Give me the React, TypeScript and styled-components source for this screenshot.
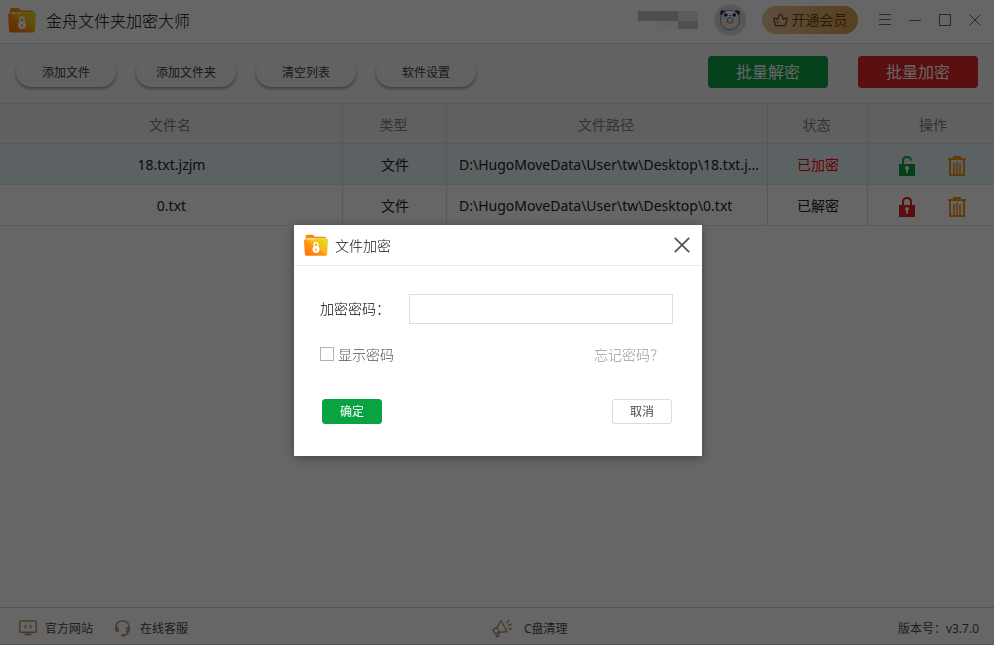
import React from "react";
import styled, { createGlobalStyle, css } from "styled-components";

const GlobalStyle = createGlobalStyle`
  * { box-sizing: border-box; }
  html, body { margin: 0; padding: 0; }
  body, button, input {
    font-family: "Noto Sans", "Noto Sans CJK SC", sans-serif;
    font-weight: 400;
  }
  button { cursor: pointer; padding: 0; border: 0; background: none; }
  a { color: inherit; text-decoration: none; }
  svg { display: block; flex: none; }
`;

const Window = styled.div`
  min-height: 100vh;
  display: flex;
  flex-direction: column;
  background: #ffffff;
  color: #1a1a1a;
`;

const TitleBar = styled.header`
  height: 44px;
  display: flex;
  align-items: center;
  padding: 0 12px 4px 8px;
  border-bottom: 1px solid #dcdcdc;
`;

const AppName = styled.h1`
  margin: 0 auto 0 10px;
  padding-top: 2px;
  font-size: 16px;
  line-height: 24px;
  font-weight: 300;
  color: #000000;
`;

const Avatar = styled.button`
  margin-left: 16px;
`;

const VipButton = styled.button`
  width: 96px;
  height: 28px;
  margin: 0 20px 0 16px;
  display: flex;
  align-items: center;
  justify-content: center;
  gap: 4px;
  border-radius: 14px;
  background: linear-gradient(90deg, #e8c59c, #dca050);
  color: #6b430c;
  font-size: 14px;
  line-height: 20px;
`;

const WindowControls = styled.div`
  display: flex;
  gap: 16px;
`;

const WindowButton = styled.button`
  width: 14px;
  height: 14px;
  color: #666666;
`;

const Toolbar = styled.div`
  height: 60px;
  display: flex;
  align-items: center;
  justify-content: space-between;
  padding: 0 16px 3px;
  background: #f5f5f5;
  border-bottom: 1px solid #e0e0e0;
`;

const ToolGroup = styled.div<{ $gap: number }>`
  display: flex;
  gap: ${(p) => p.$gap}px;
`;

const PillButton = styled.button`
  width: 100px;
  height: 30px;
  padding-top: 2px;
  border-radius: 15px;
  background: #f6f6f6;
  box-shadow: 0 2px 3px rgba(0, 0, 0, 0.35);
  color: #404040;
  font-size: 12px;
  line-height: 18px;
`;

const BatchButton = styled.button<{ $color: string }>`
  width: 120px;
  height: 32px;
  border-radius: 4px;
  background: ${(p) => p.$color};
  color: #ffffff;
  font-size: 16px;
  line-height: 24px;
`;

const Content = styled.main`
  flex: 1;
`;

const FileTable = styled.table`
  width: 100%;
  table-layout: fixed;
  border-collapse: separate;
  border-spacing: 0;
  font-size: 14px;
  line-height: 20px;
`;

const Column = styled.col<{ $width?: number }>`
  ${(p) => p.$width && css`width: ${p.$width}px;`}
`;

const HeadCell = styled.th`
  height: 40px;
  padding: 2px 0 0 4px;
  font-weight: 400;
  color: #808080;
  background: #f0f0f0;
  border-bottom: 1px solid #dedede;
  &:not(:last-child) { border-right: 1px solid #dcdcdc; padding: 2px 2px 0 0; }
`;

const Row = styled.tr<{ $selected?: boolean }>`
  background: ${(p) => (p.$selected ? "#e6f3f9" : "#ffffff")};
`;

const Cell = styled.td<{ $left?: boolean; $alert?: boolean }>`
  height: 41px;
  padding: 2px 0 0 ${(p) => (p.$left ? 12 : 1)}px;
  text-align: ${(p) => (p.$left ? "left" : "center")};
  color: ${(p) => (p.$alert ? "#ff0000" : "#222222")};
  white-space: nowrap;
  overflow: hidden;
  border-bottom: 1px solid #e4e4e4;
  &:not(:last-child) { border-right: 1px solid #dcdcdc; }
`;

const RowActions = styled.div`
  display: flex;
  justify-content: center;
  gap: 32px;
  padding: 1px 0 0 1px;
`;

const Footer = styled.footer`
  height: 38px;
  display: grid;
  grid-template-columns: 50% 1fr auto;
  align-items: center;
  padding: 6px 15px 0 3px;
  border-top: 1px solid #cfcfcf;
  border-bottom: 1px solid #cfcfcf;
  font-size: 12px;
  line-height: 18px;
  color: #4a4a4a;
`;

const FooterLinks = styled.nav`
  display: flex;
  gap: 20px;
  padding-left: 15px;
`;

const FooterLink = styled.a<{ $gap: number }>`
  display: flex;
  align-items: center;
  gap: ${(p) => p.$gap}px;
  padding-left: 1px;
  & > svg { margin-bottom: 2px; }
`;

const Backdrop = styled.div`
  position: fixed;
  inset: 0;
  display: flex;
  align-items: center;
  justify-content: center;
  padding: 36px 0 0 2px;
  background: rgba(0, 0, 0, 0.6);
`;

const Dialog = styled.form`
  width: 408px;
  background: #ffffff;
  box-shadow: 0 2px 10px rgba(0, 0, 0, 0.35);
  font-size: 14px;
  line-height: 20px;
`;

const DialogHeader = styled.div`
  height: 41px;
  display: flex;
  align-items: center;
  gap: 7px;
  padding: 0 12px 0 10px;
  border-bottom: 1px solid #ebebeb;
`;

const DialogTitle = styled.h2`
  margin: 0 auto 0 0;
  padding-top: 2px;
  font-size: 14px;
  line-height: 20px;
  font-weight: 300;
  color: #111111;
`;

const DialogBody = styled.div`
  padding: 28px 29px 32px 26px;
`;

const FieldRow = styled.div`
  display: flex;
  align-items: center;
  justify-content: space-between;
`;

const FieldLabel = styled.label`
  font-weight: 300;
  color: #000000;
`;

const PasswordInput = styled.input`
  width: 264px;
  height: 30px;
  padding: 0 8px;
  border: 1px solid #dcdcdc;
  border-radius: 0;
  background: #ffffff;
  font-size: 14px;
  outline: none;
`;

const OptionRow = styled(FieldRow)`
  margin-top: 21px;
  padding-right: 9px;
  font-weight: 300;
`;

const CheckLabel = styled.label`
  display: flex;
  align-items: center;
  gap: 4px;
  color: #555555;
`;

const CheckBox = styled.input`
  appearance: none;
  width: 14px;
  height: 14px;
  margin: 0 0 2px;
  border: 1px solid #b4b4b4;
  background: #ffffff;
  &:checked { background: #0aa344; }
`;

const ForgotLink = styled.a`
  color: #9a9a9a;
`;

const ButtonRow = styled(FieldRow)`
  margin-top: 34px;
  padding: 0 1px 0 2px;
`;

const DialogButton = styled.button<{ $primary?: boolean }>`
  width: 60px;
  height: 25px;
  border-radius: 3px;
  border: 1px solid ${(p) => (p.$primary ? "#0aa344" : "#dcdcdc")};
  background: ${(p) => (p.$primary ? "#0aa344" : "#ffffff")};
  color: ${(p) => (p.$primary ? "#ffffff" : "#4a4a4a")};
  font-size: 12px;
  line-height: 18px;
`;

function FolderIcon({ size, id }: { size: number; id: string }) {
  return (
    <svg width={size} height={size} viewBox="0 0 28 28" aria-hidden="true">
      <defs>
        <linearGradient id={id} x1="0" y1="1" x2="1" y2="0">
          <stop offset="0" stopColor="#ff6a00" />
          <stop offset="0.5" stopColor="#ff9a1a" />
          <stop offset="0.52" stopColor="#ffb31a" />
          <stop offset="1" stopColor="#d6e81c" />
        </linearGradient>
      </defs>
      <path d="M2 3.500Q2 2 3.500 2H10.500L13 4.500H24Q25.500 4.500 25.500 6V13H2Z" fill="#ff8a00" />
      <path d="M3 6H25V12H3Z" fill="#ffe9c4" />
      <path d="M0 9Q0 7.500 1.500 7.500H12L14.500 6.500H26.500Q28 6.500 27.900 8L27 24.500Q26.900 26.500 25 26.500H3Q1.200 26.500 1.100 24.500Z" fill={`url(#${id})`} />
      <path d="M11.800 16.500V13.500A2.200 2.400 0 0 1 16.200 13.500V16.500" fill="none" stroke="#fff" strokeWidth="1.500" />
      <circle cx="14" cy="19.300" r="4" fill="#fff" />
      <path d="M14 18.600V20.400" stroke="#f59a23" strokeWidth="1.400" strokeLinecap="round" />
    </svg>
  );
}

function MaskedName() {
  return (
    <svg width="60" height="18" viewBox="0 0 60 18" role="img" aria-label="用户" shapeRendering="crispEdges">
      <path d="M0 0H40V10H0Z" fill="#c4c4c4" />
      <path d="M40 0H60V10H40Z" fill="#e6e6e6" />
      <path d="M20 10H40V18H20Z" fill="#fafafa" />
      <path d="M40 10H60V18H40Z" fill="#c8c8c8" />
    </svg>
  );
}

function PandaIcon() {
  return (
    <svg width="32" height="32" viewBox="0 0 32 32" aria-hidden="true">
      <defs>
        <linearGradient id="ring" x1="0" y1="0" x2="1" y2="0">
          <stop offset="0" stopColor="#f0e2d0" />
          <stop offset="0.5" stopColor="#d5e3f2" />
          <stop offset="1" stopColor="#f0cfd3" />
        </linearGradient>
      </defs>
      <circle cx="16" cy="16" r="16" fill="url(#ring)" />
      <circle cx="16" cy="16" r="14" fill="#c9dff0" />
      <circle cx="9" cy="9" r="2.800" fill="#332650" />
      <circle cx="23" cy="9" r="2.800" fill="#332650" />
      <circle cx="16" cy="16" r="9.700" fill="#efe0d0" stroke="#8580a0" strokeWidth="1" />
      <path d="M8.500 11.500Q10 7 16 7T23.500 11.500Q20 14 16 14T8.500 11.500Z" fill="#fff" />
      <ellipse cx="11.800" cy="11" rx="2" ry="1.800" fill="#332650" />
      <ellipse cx="20.200" cy="11" rx="2" ry="1.800" fill="#332650" />
      <path d="M14.700 11H17.300L16 12.300Z" fill="#332650" />
      <circle cx="16" cy="16.300" r="3" fill="#c9dff0" stroke="#6c83ad" strokeWidth="1" />
    </svg>
  );
}

function CrownIcon() {
  return (
    <svg width="15" height="14" viewBox="0 0 15 14" fill="none" stroke="currentColor" strokeWidth="1.200" strokeLinejoin="round" aria-hidden="true">
      <path d="M3.200 12.700Q2.600 12.700 2.400 12L.800 6.200Q.600 4.800 2 5L4.500 6.500L6.300 1.800Q7.500 .200 8.700 1.800L10.500 6.500L13 5Q14.400 4.800 14.200 6.200L12.600 12Q12.400 12.700 11.800 12.700Z" />
      <path d="M4.200 8.500L5 10.300" />
    </svg>
  );
}

function ControlIcon({ d }: { d: string }) {
  return (
    <svg width="14" height="14" viewBox="0 0 14 14" fill="none" stroke="currentColor" strokeWidth="1" aria-hidden="true">
      <path d={d} />
    </svg>
  );
}

function LockIcon({ open }: { open?: boolean }) {
  return (
    <svg width="18" height="22" viewBox="0 0 18 22" aria-hidden="true">
      <path
        d={open ? "M5 10V6Q5 2 9 2Q12.500 2 13 5.500" : "M5 10V6Q5 2 9 2T13 6V10"}
        fill="none"
        stroke={open ? "#0aa344" : "#e32323"}
        strokeWidth="2"
      />
      <path d="M1 9H17V21H1Z" fill={open ? "#0aa344" : "#e32323"} />
      <circle cx="9" cy="13" r="2" fill="#ffffff" />
      <path d="M9 13V18" stroke="#ffffff" strokeWidth="1.600" />
    </svg>
  );
}

function TrashIcon() {
  return (
    <svg width="18" height="22" viewBox="0 0 18 22" fill="none" stroke="#f59018" strokeWidth="2" aria-hidden="true">
      <path d="M0 4H18M5 2H13M2 4V20H16V4" />
      <path d="M6 8V19M9 6.500V19M12 8V19" strokeWidth="1.600" />
    </svg>
  );
}

function MonitorIcon() {
  return (
    <svg width="18" height="16" viewBox="0 0 18 16" fill="none" stroke="#bd9262" strokeWidth="1.500" aria-hidden="true">
      <path d="M1.500 1H16.500Q17.200 1 17.200 1.700V11.500Q17.200 12.200 16.500 12.200H1.500Q.800 12.200 .800 11.500V1.700Q.800 1 1.500 1Z" />
      <path d="M5.500 14.500H12.500M9 12V14.500" strokeWidth="2" />
      <path d="M7.500 4.700L5.700 6.500L7.500 8.300M10.500 4.700L12.300 6.500L10.500 8.300" strokeWidth="1.200" />
    </svg>
  );
}

function HeadsetIcon() {
  return (
    <svg width="18" height="17" viewBox="0 0 18 17" fill="none" stroke="#bd9262" strokeWidth="1.500" aria-hidden="true">
      <path d="M2 8V7Q2.300 1 8.500 1T15 7V8M14.500 11Q13.500 15 9.500 15.500" />
      <path d="M2 7V11.500M15 7V11.500" strokeWidth="2" />
      <path d="M4 7V12.500M13 7V12.500" strokeWidth="1.600" />
      <circle cx="9" cy="15.300" r="1.600" fill="#bd9262" stroke="none" />
    </svg>
  );
}

function MegaphoneIcon() {
  return (
    <svg width="21" height="19" viewBox="0 0 21 19" fill="none" stroke="#bd9262" strokeWidth="1.400" strokeLinejoin="round" aria-hidden="true">
      <path d="M9 1.500L15 12.500L6.500 13.500L3.500 15L1 11.500L2.500 9.500L5 8.500ZM5 8.500L7.200 13.300" />
      <path d="M3.500 15L5 17.800L7 16.800L6.300 13.500M14.500 4L17 1M16 6.500L19.500 5M16.500 9.500L20 10" />
    </svg>
  );
}

const files = [
  { name: "18.txt.jzjm", path: "D:\\HugoMoveData\\User\\tw\\Desktop\\18.txt.j...", encrypted: true },
  { name: "0.txt", path: "D:\\HugoMoveData\\User\\tw\\Desktop\\0.txt", encrypted: false },
];

const controls = [
  { label: "菜单", d: "M1 1.500H13M1 6.500H13M1 11.500H13" },
  { label: "最小化", d: "M1 7.500H13" },
  { label: "最大化", d: "M1.500 1.500H12.500V12.500H1.500Z" },
  { label: "关闭", d: "M1.500 1.500L12.500 12.500M12.500 1.500L1.500 12.500" },
];

export default function App() {
  return (
    <>
      <GlobalStyle />
      <Window>
        <TitleBar>
          <FolderIcon size={28} id="brand" />
          <AppName>金舟文件夹加密大师</AppName>
          <MaskedName />
          <Avatar aria-label="账户"><PandaIcon /></Avatar>
          <VipButton><CrownIcon />开通会员</VipButton>
          <WindowControls>
            {controls.map((c) => (
              <WindowButton key={c.label} aria-label={c.label}>
                <ControlIcon d={c.d} />
              </WindowButton>
            ))}
          </WindowControls>
        </TitleBar>

        <Toolbar>
          <ToolGroup $gap={20}>
            {["添加文件", "添加文件夹", "清空列表", "软件设置"].map((t) => (
              <PillButton key={t}>{t}</PillButton>
            ))}
          </ToolGroup>
          <ToolGroup $gap={30}>
            <BatchButton $color="#0aa344">批量解密</BatchButton>
            <BatchButton $color="#e32323">批量加密</BatchButton>
          </ToolGroup>
        </Toolbar>

        <Content>
          <FileTable>
            <colgroup>
              <Column />
              <Column $width={104} />
              <Column $width={321} />
              <Column $width={100} />
              <Column $width={126} />
            </colgroup>
            <thead>
              <tr>
                {["文件名", "类型", "文件路径", "状态", "操作"].map((h) => (
                  <HeadCell key={h} scope="col">{h}</HeadCell>
                ))}
              </tr>
            </thead>
            <tbody>
              {files.map((f) => (
                <Row key={f.name} $selected={f.encrypted}>
                  <Cell>{f.name}</Cell>
                  <Cell>文件</Cell>
                  <Cell $left>{f.path}</Cell>
                  <Cell $alert={f.encrypted}>{f.encrypted ? "已加密" : "已解密"}</Cell>
                  <Cell>
                    <RowActions>
                      <button aria-label={f.encrypted ? "解密" : "加密"}><LockIcon open={f.encrypted} /></button>
                      <button aria-label="删除"><TrashIcon /></button>
                    </RowActions>
                  </Cell>
                </Row>
              ))}
            </tbody>
          </FileTable>
        </Content>

        <Footer>
          <FooterLinks>
            <FooterLink href="#site" $gap={8}><MonitorIcon />官方网站</FooterLink>
            <FooterLink href="#service" $gap={8}><HeadsetIcon />在线客服</FooterLink>
          </FooterLinks>
          <FooterLink href="#clean" $gap={11}><MegaphoneIcon />C盘清理</FooterLink>
          <span>版本号：v3.7.0</span>
        </Footer>
      </Window>

      <Backdrop>
        <Dialog role="dialog" aria-modal="true" aria-labelledby="dialog-title" onSubmit={(e) => e.preventDefault()}>
          <DialogHeader>
            <FolderIcon size={24} id="dialog-brand" />
            <DialogTitle id="dialog-title">文件加密</DialogTitle>
            <button type="button" aria-label="关闭">
              <svg width="16" height="16" viewBox="0 0 16 16" stroke="#555555" strokeWidth="1.800" aria-hidden="true">
                <path d="M.800 .800L15.200 15.200M15.200 .800L.800 15.200" />
              </svg>
            </button>
          </DialogHeader>
          <DialogBody>
            <FieldRow>
              <FieldLabel htmlFor="password">加密密码：</FieldLabel>
              <PasswordInput id="password" type="password" />
            </FieldRow>
            <OptionRow>
              <CheckLabel><CheckBox type="checkbox" />显示密码</CheckLabel>
              <ForgotLink href="#forgot">忘记密码？</ForgotLink>
            </OptionRow>
            <ButtonRow>
              <DialogButton type="submit" $primary>确定</DialogButton>
              <DialogButton type="button">取消</DialogButton>
            </ButtonRow>
          </DialogBody>
        </Dialog>
      </Backdrop>
    </>
  );
}
